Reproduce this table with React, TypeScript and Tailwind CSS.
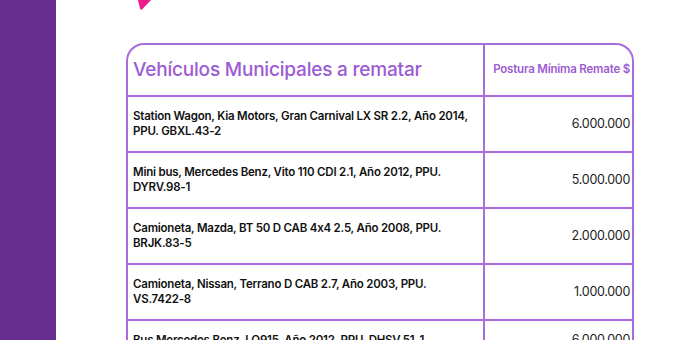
import React from 'react';

interface Vehiculo {
  descripcion: string;
  postura: string;
}

const vehiculos: Vehiculo[] = [
  {
    descripcion:
      'Station Wagon, Kia Motors, Gran Carnival LX SR 2.2, Año 2014, PPU. GBXL.43-2',
    postura: '6.000.000',
  },
  {
    descripcion: 'Mini bus, Mercedes Benz, Vito 110 CDI 2.1, Año 2012, PPU. DYRV.98-1',
    postura: '5.000.000',
  },
  {
    descripcion: 'Camioneta, Mazda, BT 50 D CAB 4x4 2.5, Año 2008, PPU. BRJK.83-5',
    postura: '2.000.000',
  },
  {
    descripcion: 'Camioneta, Nissan, Terrano D CAB 2.7, Año 2003, PPU. VS.7422-8',
    postura: '1.000.000',
  },
  {
    descripcion: 'Bus Mercedes Benz, LO915, Año 2012, PPU. DHSV.51-1',
    postura: '6.000.000',
  },
];

export default function App() {
  return (
    <div
      className="flex h-[340px] w-[700px] overflow-hidden bg-white"
      style={{ fontFamily: 'Inter, "Noto Sans", sans-serif' }}
    >
      <aside className="h-full w-[56px] shrink-0 bg-[#652d90]" />

      <main className="relative flex-1">
        <svg
          className="absolute left-[82px] top-0"
          width="14"
          height="10"
          viewBox="0 0 14 10"
        >
          <path d="M0 0 H13 L4 9.5 Q2.5 10 2 8.5 Z" fill="#ec1c8c" />
        </svg>

        <div className="ml-[70px] mt-[43px] w-[508px] overflow-hidden rounded-t-[18px] border-2 border-b-0 border-[#a86ddc]">
          <div className="grid h-[50px] grid-cols-[357px_1fr]">
            <div className="flex items-center border-r-2 border-[#a86ddc] pl-[5px] pt-[1px]">
              <h2 className="text-[19px] font-medium tracking-[-0.2px] text-[#9c5bd3]">
                Vehículos Municipales a rematar
              </h2>
            </div>
            <div className="flex items-center justify-end pr-[2px]">
              <span className="text-[11.5px] font-semibold tracking-[-0.2px] text-[#9c5bd3]">
                Postura Mínima Remate $
              </span>
            </div>
          </div>

          {vehiculos.map((v) => (
            <div
              key={v.descripcion}
              className="grid grid-cols-[357px_1fr] border-t-2 border-[#a86ddc]"
            >
              <div className="flex items-center border-r-2 border-[#a86ddc] py-[12px] pl-[5px] pr-[12px]">
                <p className="text-[11.5px] font-semibold leading-[15px] tracking-[-0.22px] text-[#111]">
                  {v.descripcion}
                </p>
              </div>
              <div className="flex items-center justify-end pr-[2px]">
                <span className="text-[12.5px] tracking-[-0.3px] text-[#222]">
                  {v.postura}
                </span>
              </div>
            </div>
          ))}
        </div>
      </main>
    </div>
  );
}
